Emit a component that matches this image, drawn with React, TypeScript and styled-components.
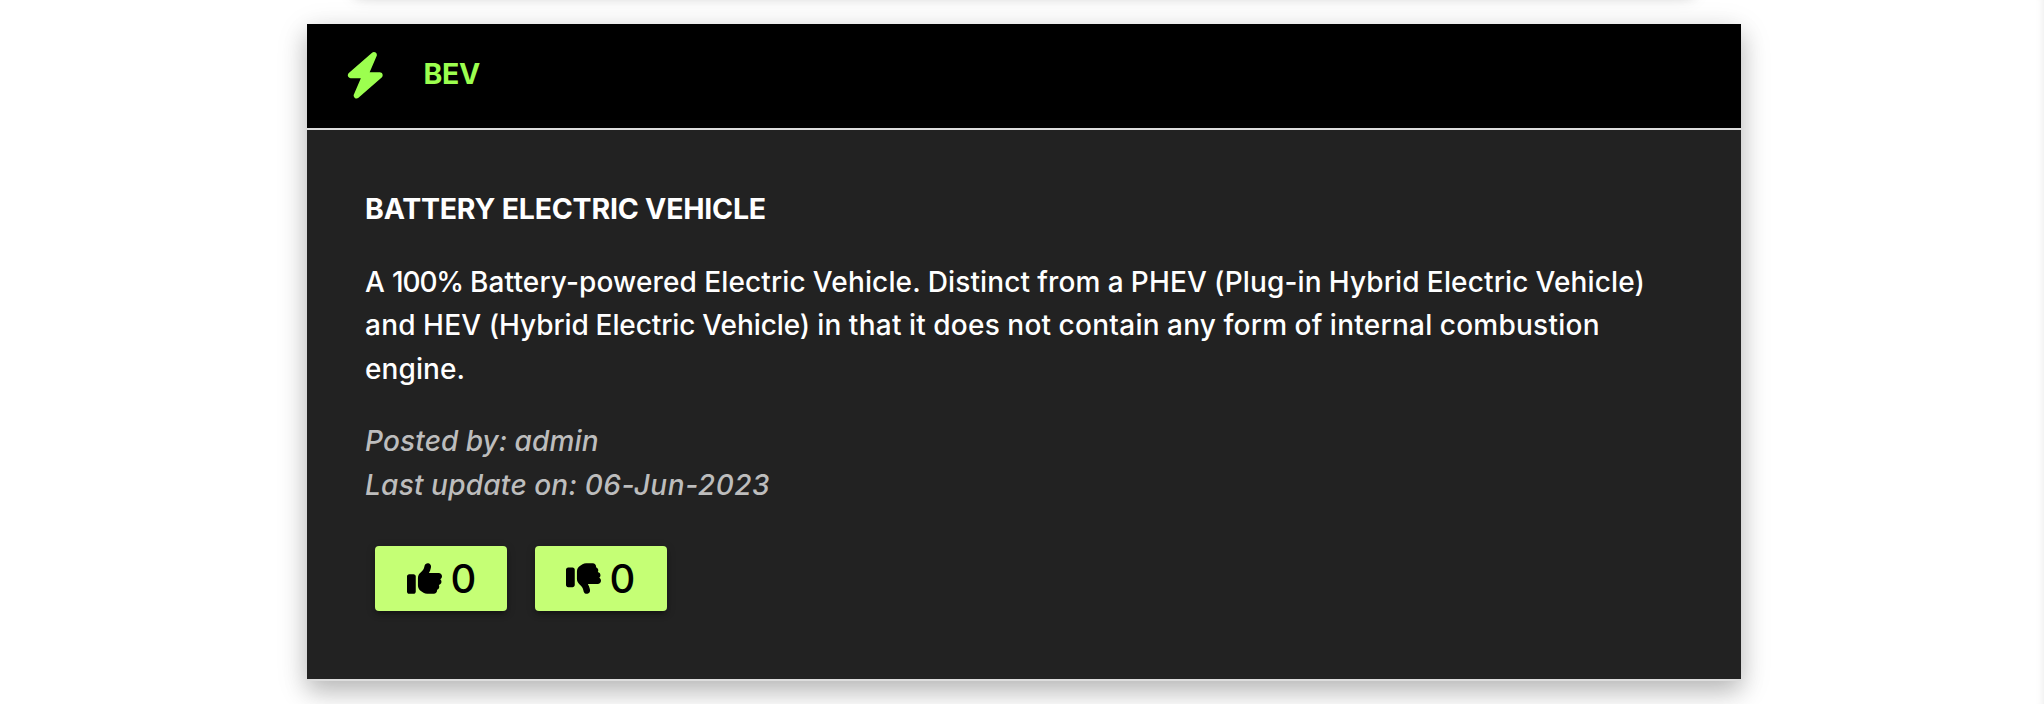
import React from 'react';
import styled, { createGlobalStyle } from 'styled-components';
import { FaBolt, FaThumbsUp, FaThumbsDown } from 'react-icons/fa6';

const GlobalStyle = createGlobalStyle`
  * { box-sizing: border-box; }
  body {
    margin: 0;
    background: #fff;
    overflow: hidden;
    font-family: Inter, Roboto, sans-serif;
    font-size: 28px;
    line-height: 43.5px;
  }
`;

const Page = styled.main`
  display: flex;
  flex-direction: column;
  align-items: center;
  height: 704px;
  overflow: hidden;
  box-shadow: inset -8px 0 8px -8px rgba(0, 0, 0, 0.1);
`;

const PreviousItem = styled.div`
  flex: none;
  width: 1338px;
  height: 40px;
  margin: -48px 0 32px 4px;
  background: #fff;
  box-shadow: 0 4px 10px rgba(0, 0, 0, 0.16), 0 4px 20px rgba(0, 0, 0, 0.12);
`;

const Card = styled.article`
  flex: none;
  width: 1434px;
  margin-left: 4px;
  box-shadow: 0 10px 22px rgba(0, 0, 0, 0.18), 0 8px 30px rgba(0, 0, 0, 0.15);
`;

const CardHeader = styled.header`
  display: flex;
  align-items: center;
  height: 106px;
  padding: 0 0 1px 35px;
  background: #000;
  border-bottom: 2px solid #ddd;
  color: #9cff4f;
`;

const BoltIcon = styled(FaBolt)`
  width: 46.5px;
  height: 46.5px;
  margin-right: 35px;
`;

const Term = styled.h2`
  margin: -3px 0 0;
  font-size: 28.5px;
  font-weight: 680;
  letter-spacing: -0.3px;
`;

const CardBody = styled.div`
  height: 551px;
  padding: 57px 58px 58px;
  background: #222;
  border-bottom: 2px solid #ddd;
  color: #fff;
`;

const Heading = styled.h3`
  margin: 0 0 30px;
  font-size: 28.5px;
  font-weight: 650;
  letter-spacing: -0.22px;
`;

const Paragraph = styled.p`
  margin: 0 0 29px;
  font-weight: 470;
`;

const Byline = styled(Paragraph)`
  margin-bottom: 39px;
  color: #bdbdbd;
  font-style: italic;
  font-weight: 500;
`;

const Line = styled.span<{ $tracking: number }>`
  display: block;
  white-space: nowrap;
  letter-spacing: ${({ $tracking }) => $tracking}px;
  word-spacing: -0.5px;
`;

const Phrase = styled.span<{ $tracking: number }>`
  letter-spacing: ${({ $tracking }) => $tracking}px;
`;

const Votes = styled.div`
  display: flex;
  gap: 28px;
  padding-left: 10px;
`;

const VoteButton = styled.button<{ $inset: number }>`
  display: flex;
  align-items: center;
  width: 132px;
  height: 65px;
  padding: 0 0 0 ${({ $inset }) => $inset}px;
  border: 0;
  border-radius: 4px;
  background: #c5ff75;
  color: #000;
  font: 500 40px Inter, Roboto, sans-serif;
  letter-spacing: -1px;
  box-shadow: 0 4px 4px rgba(0, 0, 0, 0.14), 0 6px 2px -4px rgba(0, 0, 0, 0.12),
    0 2px 10px rgba(0, 0, 0, 0.2);

  svg {
    width: 35px;
    height: 35px;
    margin: -1px 8.5px 0 0;
  }
`;

export default function App() {
  return (
    <>
      <GlobalStyle />
      <Page>
        <PreviousItem />
        <Card>
          <CardHeader>
            <BoltIcon />
            <Term>BEV</Term>
          </CardHeader>
          <CardBody>
            <Heading>BATTERY ELECTRIC VEHICLE</Heading>
            <Paragraph>
              <Line $tracking={0.14}>
                A <Phrase $tracking={-1.2}>100%</Phrase> Battery-powered Electric Vehicle. Distinct from a PHEV (Plug-in
                Hybrid Electric Vehicle)
              </Line>
              <Line $tracking={0.26}>
                and HEV <Phrase $tracking={-0.08}>(Hybrid Electric Vehicle)</Phrase> in that it does not contain any
                form of internal combustion
              </Line>
              <Line $tracking={0.1}>engine.</Line>
            </Paragraph>
            <Byline>
              <Line $tracking={0.15}>Posted by: admin</Line>
              <Line $tracking={0.55}>
                <Phrase $tracking={0.25}>Last update on:</Phrase> 06-Jun-2023
              </Line>
            </Byline>
            <Votes>
              <VoteButton $inset={32}>
                <FaThumbsUp />0
              </VoteButton>
              <VoteButton $inset={31}>
                <FaThumbsDown />0
              </VoteButton>
            </Votes>
          </CardBody>
        </Card>
      </Page>
    </>
  );
}
